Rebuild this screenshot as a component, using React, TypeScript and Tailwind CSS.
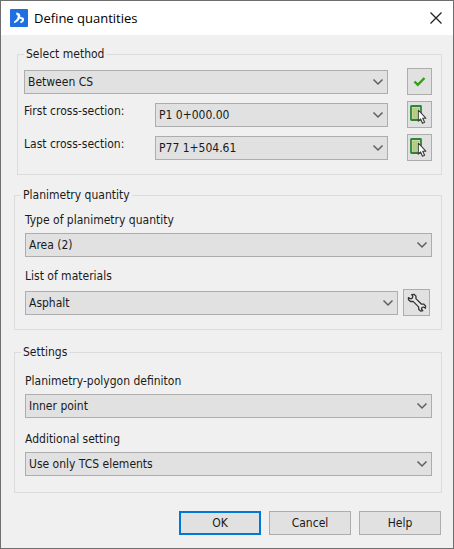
import type { ReactNode } from "react";

type SelectBoxProps = {
  id: string;
  value: string;
  label?: string;
};

function SelectBox({ id, value, label }: SelectBoxProps) {
  return (
    <div className="relative min-w-0 flex-1">
      <select
        id={id}
        aria-label={label}
        className="block h-6 w-full appearance-none border border-[#adadad] bg-[#e1e1e1] pr-6 pl-[3px] text-[#1a1a1a]"
      >
        <option>{value}</option>
      </select>
      <svg
        className="pointer-events-none absolute top-2 right-1 h-2 w-3"
        viewBox="0 0 12 8"
        fill="none"
        stroke="#5f5f5f"
        strokeWidth="1.5"
      >
        <path d="M1.5 1.5 6 6l4.5-4.5" />
      </svg>
    </div>
  );
}

function IconButton({ label, children, wide }: { label: string; children: ReactNode; wide?: boolean }) {
  return (
    <button
      type="button"
      aria-label={label}
      className={`flex h-[27px] shrink-0 items-center justify-center border border-[#adadad] bg-[#e1e1e1] ${wide ? "w-[27px]" : "w-[25px]"}`}
    >
      {children}
    </button>
  );
}

function PickIcon() {
  return (
    <svg width="19" height="19" viewBox="0 0 19 19">
      <rect x="1" y="1" width="10" height="14" rx="0.5" fill="#dfe9b4" stroke="#2d8535" strokeWidth="1.8" />
      <path d="M2.4 4h3.2v10H2.4z" fill="#b2cb85" />
      <path d="M6.2 4v10M2.4 3.2h7.5" stroke="#8fae6a" strokeWidth="0.8" />
      <path
        d="M8.3 5v11.2l2.3-2.2 1.9 4.2 2.1-.9-1.9-4.1h3.1z"
        fill="#fff"
        stroke="#3a3a3a"
        strokeWidth="1.1"
        strokeLinejoin="round"
      />
    </svg>
  );
}

function WrenchIcon() {
  return (
    <svg width="20" height="20" viewBox="0 0 20 20">
      <path
        d="M4.8 1.6 7.2 1.4 9 3.2 8.9 5.6 14.3 11 16.9 11.2 18.6 13.2 18.4 15.1 16.6 14 14.9 14.5 14.5 16.2 15.8 17.7 13.9 18.2 11.8 16.6 11.6 13.9 6.1 8.4 3.5 8.5 1.5 6.8 1.4 4.6 3.4 5.8 5.2 5.3 5.8 3.5z"
        fill="#e8e8e8"
        stroke="#333"
        strokeWidth="1.3"
        strokeLinejoin="round"
      />
    </svg>
  );
}

export default function App() {
  const crossSections = [
    { id: "first", label: "First cross-section:", value: "P1 0+000.00" },
    { id: "last", label: "Last cross-section:", value: "P77 1+504.61" },
  ];

  const settings = [
    { id: "polygon", label: "Planimetry-polygon definiton", value: "Inner point" },
    { id: "additional", label: "Additional setting", value: "Use only TCS elements" },
  ];

  return (
    <div className="border border-[#6e6e6e] bg-[#f0f0f0] font-['DejaVu_Sans_Condensed','DejaVu_Sans',sans-serif] text-[12px] leading-4 text-[#1a1a1a]">
      <header className="flex h-[34px] items-center bg-white pr-[11px] pl-[9px]">
        <svg width="18" height="18" viewBox="0 0 18 18">
          <rect width="18" height="18" rx="1" fill="#1f6fe0" />
          <path d="M6.3 3.6c3 .3 4.4 1.8 4 4.2-.4 2.6-2.6 5-6 6.4l-.3-1.8c2.2-1.2 3.5-2.9 3.7-4.7.1-1-.3-1.7-1.4-2z" fill="#fff" />
          <path d="M10.2 8c2.7 0 4.2 1.3 3.9 3.1-.2 1.4-1.3 2.5-3 3.1l-1.5-1.4c1.4-.4 2.2-1 2.3-1.8.1-.7-.6-1.1-2.2-1.2z" fill="#fff" />
        </svg>
        <h1 className="ml-[6px] flex-1 font-['Open_Sans',sans-serif] text-[13px] text-black">Define quantities</h1>
        <button type="button" aria-label="Close" className="flex">
          <svg width="12" height="12" viewBox="0 0 12 12" stroke="#222" strokeWidth="1.3">
            <path d="M.5.5l11 11M11.5.5l-11 11" />
          </svg>
        </button>
      </header>

      <main className="pt-[11px] pr-[11px] pb-[13px] pl-[13px]">
        <fieldset className="ml-[3px] border border-[#dcdcdc] pt-[6px] pr-[9px] pb-[13px] pl-[6px]">
          <legend className="px-[2px]">Select method</legend>
          <div className="flex flex-col gap-[6px]">
            <div className="flex items-center gap-[19px]">
              <SelectBox id="method" value="Between CS" label="Select method" />
              <IconButton label="Apply">
                <svg width="13" height="11" viewBox="0 0 13 11" fill="none" stroke="#32a010" strokeWidth="2.4">
                  <path d="M1.5 5.5 4.8 8.8 11.5 2" />
                </svg>
              </IconButton>
            </div>
            {crossSections.map((row) => (
              <div key={row.id} className="flex items-center gap-[19px]">
                <div className="flex min-w-0 flex-1 items-start">
                  <label htmlFor={row.id} className="w-[131px]">{row.label}</label>
                  <SelectBox id={row.id} value={row.value} />
                </div>
                <IconButton label="Pick in drawing">
                  <PickIcon />
                </IconButton>
              </div>
            ))}
          </div>
        </fieldset>

        <fieldset className="mt-3 border border-[#dcdcdc] pt-[9px] pr-[9px] pb-[13px] pl-[10px]">
          <legend className="-ml-1 px-[2px]">Planimetry quantity</legend>
          <label htmlFor="quantity" className="mb-[5px] block">Type of planimetry quantity</label>
          <SelectBox id="quantity" value="Area (2)" />
          <label htmlFor="materials" className="mt-[11px] mb-[5px] block">List of materials</label>
          <div className="flex items-center gap-[5px] pr-[2px]">
            <SelectBox id="materials" value="Asphalt" />
            <IconButton label="Edit materials" wide>
              <WrenchIcon />
            </IconButton>
          </div>
        </fieldset>

        <fieldset className="mt-[14px] border border-[#dcdcdc] pt-[13px] pr-[9px] pb-4 pl-[10px]">
          <legend className="-ml-1 px-[2px]">Settings</legend>
          <div className="flex flex-col gap-[13px]">
            {settings.map((field) => (
              <div key={field.id}>
                <label htmlFor={field.id} className="mb-[5px] block">{field.label}</label>
                <SelectBox id={field.id} value={field.value} />
              </div>
            ))}
          </div>
        </fieldset>

        <div className="mt-[18px] flex justify-end gap-2 pr-px">
          <button type="button" className="h-6 w-[82px] border-2 border-[#0078d7] bg-[#e1e1e1]">OK</button>
          <button type="button" className="h-6 w-[82px] border border-[#adadad] bg-[#e1e1e1]">Cancel</button>
          <button type="button" className="h-6 w-[82px] border border-[#adadad] bg-[#e1e1e1]">Help</button>
        </div>
      </main>
    </div>
  );
}
